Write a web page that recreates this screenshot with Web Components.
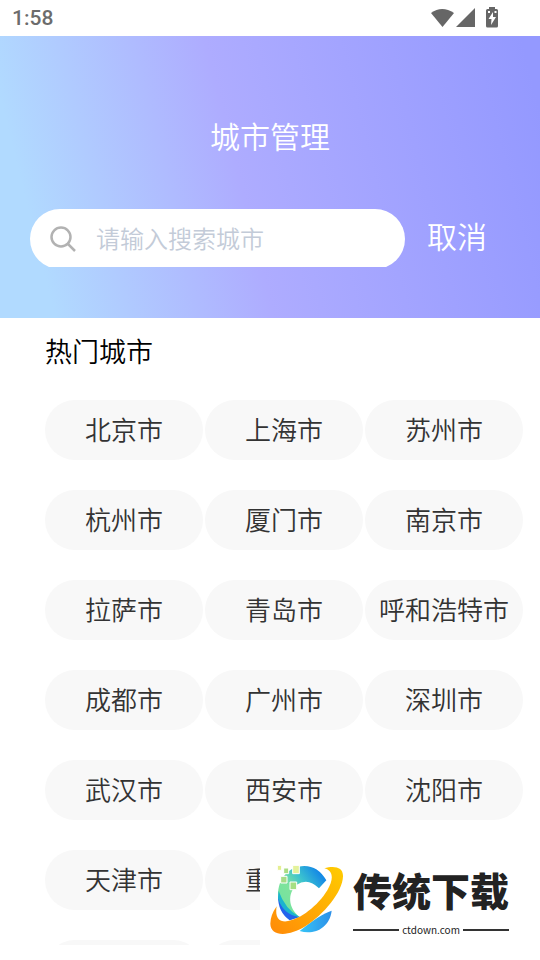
<!DOCTYPE html>
<html lang="zh-CN">
<head>
<meta charset="utf-8">
<meta name="viewport" content="width=device-width, initial-scale=1">
<title>城市管理</title>
<style>
  body {
    margin: 0;
    background: #fff;
    font-family: "Noto Sans CJK SC", sans-serif;
  }
</style>
</head>
<body>
<city-page>
  <status-bar slot="status">1:58</status-bar>
  <city-header slot="header" placeholder="请输入搜索城市">
    城市管理
    <span slot="cancel">取消</span>
  </city-header>
  <city-list>
    <span slot="title">热门城市</span>
    <city-chip>北京市</city-chip>
    <city-chip>上海市</city-chip>
    <city-chip>苏州市</city-chip>
    <city-chip>杭州市</city-chip>
    <city-chip>厦门市</city-chip>
    <city-chip>南京市</city-chip>
    <city-chip>拉萨市</city-chip>
    <city-chip>青岛市</city-chip>
    <city-chip>呼和浩特市</city-chip>
    <city-chip>成都市</city-chip>
    <city-chip>广州市</city-chip>
    <city-chip>深圳市</city-chip>
    <city-chip>武汉市</city-chip>
    <city-chip>西安市</city-chip>
    <city-chip>沈阳市</city-chip>
    <city-chip>天津市</city-chip>
    <city-chip>重庆市</city-chip>
    <city-chip empty></city-chip>
    <city-chip empty></city-chip>
    <city-chip empty></city-chip>
  </city-list>
  <site-badge slot="badge">
    传统下载
    <span slot="domain">ctdown.com</span>
  </site-badge>
</city-page>

<script>
class CityPage extends HTMLElement {
  constructor() {
    super();
    this.attachShadow({ mode: 'open' });
    this.shadowRoot.innerHTML = `
      <style>
        :host {
          display: flex;
          flex-direction: column;
          height: 100vh;
          overflow: hidden;
        }

        main {
          flex: 1;
          min-height: 0;
          overflow: hidden;
        }

        footer {
          height: 15px;
        }
      </style>
      <slot name="status"></slot>
      <slot name="header"></slot>
      <main><slot></slot></main>
      <footer></footer>
      <slot name="badge"></slot>
    `;
  }
}

class StatusBar extends HTMLElement {
  constructor() {
    super();
    this.attachShadow({ mode: 'open' });
    this.shadowRoot.innerHTML = `
      <style>
        :host {
          display: flex;
          flex: none;
          justify-content: space-between;
          align-items: center;
          height: 36px;
          padding: 0 40px 0 12px;
          box-sizing: border-box;
          color: #6c6c6c;
          font: 500 21px/36px Roboto, sans-serif;
        }

        svg {
          display: block;
          fill: #666;
        }
      </style>
      <span><slot></slot></span>
      <svg width="70" height="22" viewBox="0 0 70 22" aria-hidden="true">
        <path d="M1 6Q12 -2 24 6L12.500 20Z"/>
        <path d="M45 1V20H26Z"/>
        <path fill-rule="evenodd" d="M59 0h6v2h1.500q1.500 0 1.500 1.500V19q0 1.500-1.500 1.500h-9Q56 20.500 56 19V3.500Q56 2 57.500 2H59ZM63 5l-4.500 7h3l-.500 6 5-8h-3ZM58 4v2h2V4ZM64.500 4v2h2V4Z"/>
      </svg>
    `;
  }
}

class CityHeader extends HTMLElement {
  constructor() {
    super();
    this.attachShadow({ mode: 'open' });
    this.shadowRoot.innerHTML = `
      <style>
        :host {
          display: block;
          flex: none;
          height: 282px;
          padding: 78px 30px 0;
          box-sizing: border-box;
          color: #fff;
          background: linear-gradient(76deg, #b1daff 9%, #aeacff 45%, #9499ff 97%);
        }

        h1 {
          margin: 0 0 53px;
          font-size: 30px;
          line-height: 42px;
          font-weight: 350;
          text-align: center;
        }

        form {
          display: flex;
          gap: 22px;
        }

        /* the field is slightly taller than its row, so its lower edge is cut flat */
        .field {
          flex: 1;
          min-width: 0;
          height: 58px;
          overflow: hidden;
        }

        label {
          display: flex;
          align-items: center;
          gap: 20px;
          height: 60px;
          padding: 0 20px;
          border-radius: 30px;
          background: #fff;
        }

        svg {
          flex: none;
        }

        input {
          flex: 1;
          min-width: 0;
          height: 36px;
          padding: 0 0 4px;
          box-sizing: border-box;
          border: 0;
          outline: 0;
          background: none;
          color: #333;
          font: 350 24px/32px "Noto Sans CJK SC", sans-serif;
        }

        input::placeholder {
          color: #c3cbd8;
          opacity: 1;
        }

        button {
          width: 83px;
          height: 52px;
          padding: 0;
          border: 0;
          background: none;
          color: inherit;
          font: 350 30px/52px "Noto Sans CJK SC", sans-serif;
          text-align: left;
        }
      </style>
      <h1><slot></slot></h1>
      <form>
        <div class="field">
          <label>
            <svg width="26" height="26" viewBox="0 0 26 26" fill="none" stroke="#b2b2b2" stroke-width="2.500" aria-hidden="true">
              <circle cx="11" cy="11" r="9.500"/>
              <path d="M18 18L25 25"/>
            </svg>
            <input type="text">
          </label>
        </div>
        <button type="button"><slot name="cancel"></slot></button>
      </form>
    `;
  }

  connectedCallback() {
    const input = this.shadowRoot.querySelector('input');
    input.placeholder = this.getAttribute('placeholder');
    input.setAttribute('aria-label', input.placeholder);
    this.shadowRoot.querySelector('button').addEventListener('click', () => {
      input.value = '';
    });
  }
}

class CityList extends HTMLElement {
  constructor() {
    super();
    this.attachShadow({ mode: 'open' });
    this.shadowRoot.innerHTML = `
      <style>
        :host {
          display: block;
          padding: 14px 17px 0 45px;
        }

        h2 {
          margin: 0 0 30px;
          color: #000;
          font-size: 27px;
          line-height: 38px;
          font-weight: 350;
        }

        .grid {
          display: grid;
          grid-template-columns: repeat(3, 1fr);
          gap: 30px 2px;
        }
      </style>
      <h2><slot name="title"></slot></h2>
      <div class="grid"><slot></slot></div>
    `;
  }
}

class CityChip extends HTMLElement {
  constructor() {
    super();
    this.attachShadow({ mode: 'open' });
    this.shadowRoot.innerHTML = `
      <style>
        :host {
          display: block;
          min-width: 0;
          height: 60px;
          border-radius: 30px;
          background: #f8f8f8;
        }

        :host([empty]) button {
          display: none;
        }

        button {
          display: block;
          width: 100%;
          height: 60px;
          padding: 0 0 2px;
          border: 0;
          border-radius: 30px;
          background: none;
          color: #333;
          font: 350 26px/58px "Noto Sans CJK SC", sans-serif;
          white-space: nowrap;
        }
      </style>
      <button type="button"><slot></slot></button>
    `;
  }
}

class SiteBadge extends HTMLElement {
  constructor() {
    super();
    this.attachShadow({ mode: 'open' });
    this.shadowRoot.innerHTML = `
      <style>
        :host {
          position: fixed;
          right: 0;
          bottom: 0;
          display: flex;
          align-items: flex-start;
          gap: 8px;
          width: 280px;
          height: 110px;
          padding: 15px 0 0 10px;
          box-sizing: border-box;
          background: #fff;
          color: #222;
        }

        svg {
          flex: none;
        }

        .name {
          margin-bottom: 8px;
          font-size: 39px;
          line-height: 49px;
          font-weight: 900;
          white-space: nowrap;
        }

        .domain {
          display: flex;
          align-items: center;
          gap: 3px;
          font: 400 10px/16px "Noto Sans CJK SC", sans-serif;
        }

        .domain::before,
        .domain::after {
          content: "";
          flex: 1;
          height: 2px;
          background: #333;
        }
      </style>
      <svg width="75" height="70" viewBox="60 75 225 210" aria-hidden="true">
        <defs>
          <linearGradient id="arc" gradientUnits="userSpaceOnUse" x1="95" y1="200" x2="215" y2="110">
            <stop offset="0" stop-color="#72e3a0"/>
            <stop offset=".35" stop-color="#7fe39c"/>
            <stop offset=".65" stop-color="#3cc3cf"/>
            <stop offset="1" stop-color="#168be5"/>
          </linearGradient>
          <linearGradient id="ring" x1="0" y1="1" x2="1" y2="0">
            <stop offset="0" stop-color="#ff8a08"/>
            <stop offset="1" stop-color="#ffcc00"/>
          </linearGradient>
          <linearGradient id="low" x1="0" y1="0" x2="1" y2="0">
            <stop offset="0" stop-color="#36c5f7"/>
            <stop offset="1" stop-color="#2c8fe8"/>
          </linearGradient>
        </defs>
        <path fill="url(#arc)" d="M229 121Q204 78 163 78C116 79 84 115 84 166Q86 208 119 240L149 231C113 203 113 160 139 135Q174 111 207 145Z"/>
        <path fill="#2463ec" d="M84 166Q94 218 149 231L119 241Q83 216 84 166Z"/>
        <path fill="#1bb4cf" d="M86 153Q105 208 149 231Q98 224 84 173Z"/>
        <path fill="url(#low)" d="M245 212Q208 224 149 273C192 286 239 264 245 212Z"/>
        <path fill="url(#ring)" d="M223 85C254 76 280 82 279 109C278 157 220 225 166 259C118 289 62 292 61 251Q61 226 80 199C75 229 84 246 110 244C151 239 204 197 232 151C252 117 250 92 223 85Z"/>
        <g stroke="#fff" stroke-width="3">
          <path fill="#e5ef91" d="M82 76h13v15H82Z"/>
          <path fill="#aadd82" d="M101 84h15v17h-15Z"/>
          <path fill="#e4f29b" d="M128 76h20v25h-20Z"/>
          <path fill="#a6dc87" d="M92 109h19v20H92Z"/>
          <path fill="#a6df83" d="M120 126h20v23h-20Z"/>
        </g>
      </svg>
      <div>
        <div class="name"><slot></slot></div>
        <div class="domain"><slot name="domain"></slot></div>
      </div>
    `;
  }
}

customElements.define('city-page', CityPage);
customElements.define('status-bar', StatusBar);
customElements.define('city-header', CityHeader);
customElements.define('city-list', CityList);
customElements.define('city-chip', CityChip);
customElements.define('site-badge', SiteBadge);
</script>
</body>
</html>
